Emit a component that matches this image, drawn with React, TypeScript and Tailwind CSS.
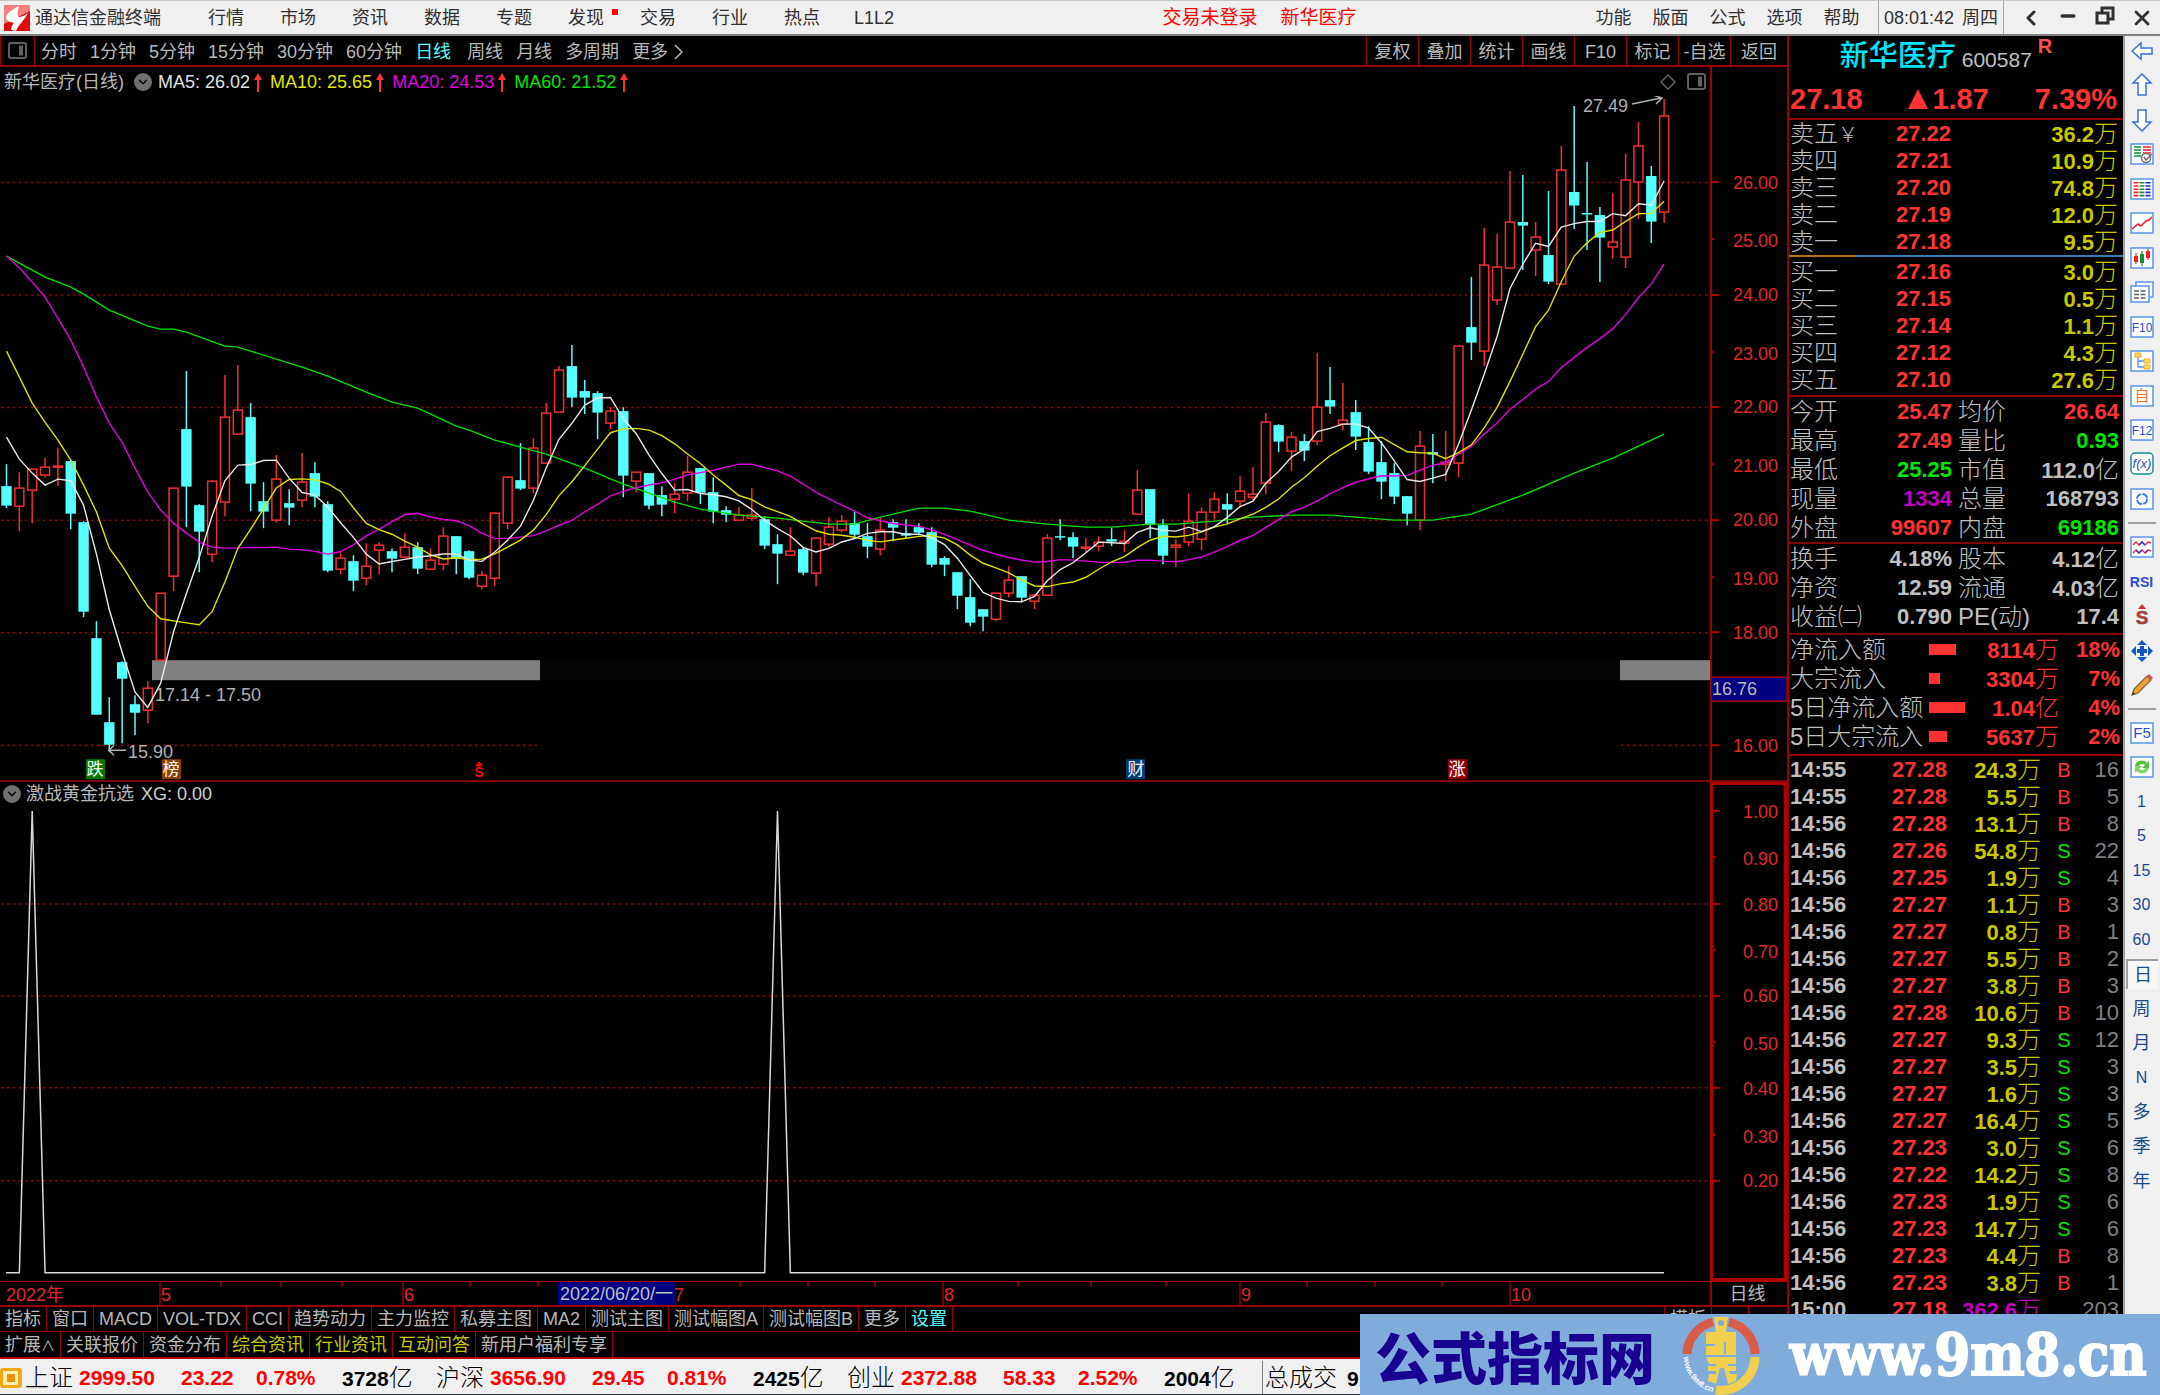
import type { ReactNode } from 'react';
import { ChevronDown, ChevronLeft, Minus, X } from 'lucide-react';

// direction, high, body top, body bottom, low
type Candle = ['u' | 'd', number, number, number, number];

const candles: Candle[] = [
  ['d', 464, 486, 505, 508], ['u', 472, 488, 506, 531], ['u', 469, 469, 490, 523], ['u', 458, 467, 475, 477], ['u', 448, 466, 466, 486],
  ['d', 460, 461, 513, 529], ['d', 521, 522, 611, 617], ['d', 621, 638, 714, 714], ['d', 697, 722, 744, 752], ['d', 661, 662, 678, 743],
  ['d', 695, 704, 712, 735], ['u', 681, 688, 710, 723], ['u', 593, 593, 660, 660], ['u', 488, 488, 576, 591], ['d', 371, 429, 486, 527],
  ['d', 504, 505, 531, 572], ['u', 480, 481, 554, 562], ['u', 375, 417, 502, 516], ['u', 365, 410, 434, 434], ['d', 403, 417, 483, 511],
  ['d', 482, 501, 511, 528], ['u', 455, 479, 520, 522], ['d', 489, 503, 507, 525], ['u', 453, 482, 500, 507], ['d', 462, 473, 496, 507],
  ['d', 501, 504, 570, 572], ['u', 552, 558, 569, 574], ['d', 555, 561, 580, 591], ['u', 543, 566, 578, 585], ['u', 542, 545, 550, 574],
  ['d', 548, 551, 558, 572], ['u', 533, 547, 557, 558], ['d', 542, 547, 568, 574], ['u', 548, 560, 569, 570], ['u', 527, 536, 564, 570],
  ['d', 536, 536, 558, 574], ['d', 550, 551, 577, 579], ['u', 571, 575, 586, 589], ['u', 512, 513, 578, 586], ['u', 476, 477, 523, 529],
  ['d', 443, 480, 488, 490], ['u', 438, 448, 488, 493], ['u', 403, 413, 463, 463], ['u', 366, 370, 412, 412], ['d', 345, 366, 397, 407],
  ['d', 380, 391, 397, 414], ['d', 391, 393, 412, 439], ['u', 407, 411, 423, 429], ['d', 407, 411, 475, 497], ['u', 472, 472, 481, 492],
  ['d', 473, 473, 505, 509], ['d', 486, 495, 504, 516], ['u', 483, 494, 499, 513], ['u', 456, 472, 493, 501], ['d', 468, 468, 492, 504],
  ['d', 477, 492, 511, 523], ['d', 506, 510, 514, 522], ['u', 507, 515, 520, 520], ['u', 488, 515, 518, 520], ['d', 516, 519, 545, 549],
  ['d', 534, 544, 553, 584], ['u', 527, 551, 555, 555], ['d', 547, 549, 572, 575], ['u', 538, 538, 573, 586], ['u', 517, 527, 544, 547],
  ['u', 515, 521, 530, 532], ['d', 511, 523, 534, 538], ['d', 523, 536, 546, 558], ['u', 517, 530, 549, 555], ['d', 519, 522, 527, 541],
  ['d', 519, 533, 535, 538], ['d', 523, 527, 532, 535], ['d', 527, 532, 564, 567], ['d', 556, 558, 564, 576], ['d', 572, 572, 595, 609],
  ['d', 579, 597, 622, 626], ['d', 609, 609, 616, 631], ['u', 593, 593, 619, 621], ['u', 566, 580, 593, 597], ['d', 576, 576, 597, 602],
  ['u', 594, 595, 601, 609], ['u', 534, 538, 595, 595], ['d', 519, 536, 537, 540], ['d', 532, 537, 546, 558], ['u', 538, 547, 547, 552],
  ['u', 536, 542, 546, 551], ['d', 528, 539, 541, 546], ['u', 530, 541, 543, 552], ['u', 470, 490, 514, 514], ['d', 489, 489, 524, 538],
  ['d', 519, 525, 555, 564], ['u', 539, 545, 547, 567], ['u', 493, 521, 542, 546], ['u', 507, 512, 539, 550], ['u', 492, 499, 512, 519],
  ['d', 493, 504, 509, 523], ['u', 476, 491, 501, 507], ['u', 467, 494, 497, 500], ['u', 413, 422, 483, 494], ['d', 424, 425, 441, 452],
  ['u', 432, 437, 451, 471], ['d', 434, 441, 450, 461], ['u', 353, 407, 441, 445], ['d', 367, 400, 406, 414], ['u', 383, 420, 424, 430],
  ['d', 400, 412, 436, 450], ['d', 426, 442, 471, 474], ['d', 441, 462, 481, 499], ['d', 463, 473, 496, 504], ['d', 496, 496, 513, 525],
  ['u', 431, 446, 520, 530], ['d', 434, 452, 454, 483], ['u', 431, 462, 464, 481], ['u', 346, 346, 463, 477], ['d', 277, 327, 342, 360],
  ['u', 228, 265, 351, 366], ['u', 234, 267, 300, 305], ['u', 171, 222, 268, 268], ['d', 175, 222, 225, 270], ['u', 222, 237, 250, 276],
  ['d', 191, 255, 281, 284], ['u', 146, 170, 284, 284], ['d', 106, 192, 205, 229], ['d', 162, 213, 214, 250], ['d', 207, 215, 237, 282],
  ['u', 193, 242, 247, 259], ['u', 154, 180, 257, 268], ['u', 122, 146, 182, 219], ['d', 166, 176, 221, 243], ['u', 99, 116, 212, 223],
];

const xAt = (i: number) => 6.5 + 12.85 * i;
const closeOf = (c: Candle) => (c[0] === 'u' ? c[2] : c[3]);

// the first values come from bars that lie before the visible window
function movingAverage(n: number, lead: number[]) {
  return candles
    .map((_, i) => {
      const y = i < lead.length ? lead[i] : candles.slice(i - n + 1, i + 1).reduce((s, c) => s + closeOf(c), 0) / n;
      return `${xAt(i).toFixed(1)},${y.toFixed(1)}`;
    })
    .join(' ');
}

const ma5 = movingAverage(5, [437, 459, 473, 485]);
const ma10 = movingAverage(10, [351, 377, 403, 422, 440, 460, 485, 512, 548]);
const ma20 = movingAverage(20, [256, 268, 282, 297, 318, 340, 367, 397, 423, 442, 468, 492, 510, 523, 533, 542, 547, 548, 548]);
const ma60 = [
  [0, 256], [3, 277], [5, 287], [6, 294], [8, 310], [11, 326], [12, 329], [13, 329], [14, 332], [17, 346], [18, 347], [19, 351],
  [22, 363], [23, 367], [25, 376], [28, 392], [30, 402], [32, 408], [35, 426], [36, 430], [38, 440], [40, 447], [42, 454], [45, 468],
  [48, 484], [50, 493], [52, 502], [54, 509], [57, 515], [60, 518], [62, 521], [64, 524], [66, 524], [68, 517], [71, 508], [73, 508],
  [75, 511], [78, 520], [81, 524], [84, 527], [86, 527], [89, 524], [91, 524], [94, 521], [97, 517], [100, 515], [103, 515], [106, 518],
  [108, 520], [111, 520], [112, 518], [114, 514], [118, 495], [122, 473], [125, 458], [129, 434],
].map(([i, y]) => `${xAt(i).toFixed(1)},${y}`).join(' ');

const priceAxis = [
  { label: '26.00', y: 182, at: 183 }, { label: '25.00', y: 239, at: 241 }, { label: '24.00', y: 295, at: 295 },
  { label: '23.00', y: 352, at: 354 }, { label: '22.00', y: 407, at: 407 }, { label: '21.00', y: 464, at: 466 },
  { label: '20.00', y: 520, at: 520 }, { label: '19.00', y: 577, at: 579 }, { label: '18.00', y: 632, at: 633 },
  { label: '16.00', y: 745, at: 746 },
];

const signalAxis = [
  { label: '1.00', y: 811, at: 812 }, { label: '0.90', y: 857, at: 859 }, { label: '0.80', y: 904, at: 905 },
  { label: '0.70', y: 950, at: 952 }, { label: '0.60', y: 996, at: 996 }, { label: '0.50', y: 1042, at: 1044 },
  { label: '0.40', y: 1088, at: 1089 }, { label: '0.30', y: 1135, at: 1137 }, { label: '0.20', y: 1181, at: 1181 },
];

const asks = [['卖五', '27.22', '36.2万'], ['卖四', '27.21', '10.9万'], ['卖三', '27.20', '74.8万'], ['卖二', '27.19', '12.0万'], ['卖一', '27.18', '9.5万']];
const bids = [['买一', '27.16', '3.0万'], ['买二', '27.15', '0.5万'], ['买三', '27.14', '1.1万'], ['买四', '27.12', '4.3万'], ['买五', '27.10', '27.6万']];

const RED = 'text-[#ff3232]';
const GREEN = 'text-[#00e600]';
const GREY = 'text-[#c0c0c0]';
const PURPLE = 'text-[#c000c0]';

const dayStats = [
  ['今开', '25.47', RED, '均价', '26.64', RED],
  ['最高', '27.49', RED, '量比', '0.93', GREEN],
  ['最低', '25.25', GREEN, '市值', '112.0亿', GREY],
  ['现量', '1334', PURPLE, '总量', '168793', GREY],
  ['外盘', '99607', RED, '内盘', '69186', GREEN],
];
const baseStats = [
  ['换手', '4.18%', GREY, '股本', '4.12亿', GREY],
  ['净资', '12.59', GREY, '流通', '4.03亿', GREY],
  ['收益㈡', '0.790', GREY, 'PE(动)', '17.4', GREY],
];
const flows = [
  { label: '净流入额', bar: 27, amount: '8114万', pct: '18%' },
  { label: '大宗流入', bar: 11, amount: '3304万', pct: '7%' },
  { label: '5日净流入额', bar: 36, amount: '1.04亿', pct: '4%' },
  { label: '5日大宗流入', bar: 18, amount: '5637万', pct: '2%' },
];
const ticks = [
  ['14:55', '27.28', '24.3万', 'B', '16'], ['14:55', '27.28', '5.5万', 'B', '5'], ['14:56', '27.28', '13.1万', 'B', '8'],
  ['14:56', '27.26', '54.8万', 'S', '22'], ['14:56', '27.25', '1.9万', 'S', '4'], ['14:56', '27.27', '1.1万', 'B', '3'],
  ['14:56', '27.27', '0.8万', 'B', '1'], ['14:56', '27.27', '5.5万', 'B', '2'], ['14:56', '27.27', '3.8万', 'B', '3'],
  ['14:56', '27.28', '10.6万', 'B', '10'], ['14:56', '27.27', '9.3万', 'S', '12'], ['14:56', '27.27', '3.5万', 'S', '3'],
  ['14:56', '27.27', '1.6万', 'S', '3'], ['14:56', '27.27', '16.4万', 'S', '5'], ['14:56', '27.23', '3.0万', 'S', '6'],
  ['14:56', '27.22', '14.2万', 'S', '8'], ['14:56', '27.23', '1.9万', 'S', '6'], ['14:56', '27.23', '14.7万', 'S', '6'],
  ['14:56', '27.23', '4.4万', 'B', '8'], ['14:56', '27.23', '3.8万', 'B', '1'], ['15:00', '27.18', '362.6万', '', '203'],
];

const indices = [
  { name: '上证', value: '2999.50', change: '23.22', pct: '0.78%', amount: '3728亿' },
  { name: '沪深', value: '3656.90', change: '29.45', pct: '0.81%', amount: '2425亿' },
  { name: '创业', value: '2372.88', change: '58.33', pct: '2.52%', amount: '2004亿' },
];

/* ---------- small pieces ---------- */

// digits are bold, the unit behind them is not
function Num({ value }: { value: string }) {
  const unit = /[万亿]$/.test(value) ? value.slice(-1) : '';
  return (
    <>
      <span className="text-[22px] font-bold">{unit ? value.slice(0, -1) : value}</span>
      {unit && <span className="text-2xl leading-none font-light">{unit}</span>}
    </>
  );
}

function PaneIcon({ className }: { className: string }) {
  return (
    <svg className={className} width="19" height="17" viewBox="0 0 19 17" fill="none">
      <rect x="1" y="1" width="17" height="15" rx="2" stroke="currentColor" strokeWidth="2" />
      <rect x="11" y="3.500" width="4" height="10" fill="currentColor" />
    </svg>
  );
}

function ToggleDot() {
  return (
    <button aria-label="展开" className="flex size-[18px] shrink-0 items-center justify-center rounded-full bg-[#707070] text-black">
      <ChevronDown size={14} strokeWidth={2.5} />
    </button>
  );
}

function UpArrow() {
  return (
    <svg width="8" height="20" viewBox="0 0 8 20" fill="#ff3232">
      <path d="M4 1 8 8H0z" />
      <rect x="3" y="7" width="2" height="13" />
    </svg>
  );
}

/* ---------- header ---------- */

function TitleBar() {
  const menu = ['行情', '市场', '资讯', '数据', '专题', '发现', '交易', '行业', '热点', 'L1L2'];
  return (
    <header className="flex h-9 shrink-0 items-center border-t border-b-2 border-t-[#c8c8c8] border-b-[#808080] bg-[#f0f0f0] text-lg leading-none text-[#303030]">
      <svg className="ml-1 shrink-0" width="26" height="26" viewBox="0 0 26 26">
        <rect width="26" height="26" fill="#e00a0a" />
        <path d="M0 0h26v6L0 19z" fill="#f28080" />
        <path d="M15 1C9 4 3 8 2 12c0 4 4 5 8 6-2 2-3 4-3 7l5 1c3-7 8-10 12-18-4 3-7 4-9 4-2-1-2-5 0-11z" fill="#fff" />
      </svg>
      <h1 className="ml-[5px] w-[155px] shrink-0 whitespace-nowrap">通达信金融终端</h1>
      <nav className="flex shrink-0">
        {menu.map(m => (
          <button key={m} className="relative w-[72px] text-center">
            {m}
            {m === '发现' && <span className="absolute top-0 right-1 size-1.5 bg-[#ff0000]" />}
          </button>
        ))}
      </nav>
      <div className="flex flex-1 justify-center gap-[23px] pl-6 text-[19px] whitespace-nowrap text-[#ff0000]">
        <button>交易未登录</button>
        <button>新华医疗</button>
      </div>
      <nav className="flex shrink-0">
        {['功能', '版面', '公式', '选项', '帮助'].map(m => (
          <button key={m} className="w-[57px] text-center">{m}</button>
        ))}
      </nav>
      <div className="ml-2 flex h-full w-[126px] shrink-0 items-center justify-center gap-2 border-x border-[#a8a8a8] whitespace-nowrap">
        <time>08:01:42</time>
        <span>周四</span>
      </div>
      <div className="ml-2 flex shrink-0 text-[#303030]">
        <button aria-label="后退" className="flex w-[37px] justify-center"><ChevronLeft size={24} strokeWidth={3} /></button>
        <button aria-label="最小化" className="flex w-[37px] justify-center"><Minus size={20} strokeWidth={4} /></button>
        <button aria-label="还原" className="flex w-[37px] justify-center">
          <svg width="20" height="20" viewBox="0 0 20 20" fill="none" stroke="currentColor" strokeWidth="3">
            <path d="M7 6V2h11v11h-4" />
            <rect x="2" y="7" width="11" height="10" />
          </svg>
        </button>
        <button aria-label="关闭" className="flex w-[37px] justify-center"><X size={24} strokeWidth={2.8} /></button>
      </div>
    </header>
  );
}

function PeriodBar() {
  const periods = ['分时', '1分钟', '5分钟', '15分钟', '30分钟', '60分钟', '日线', '周线', '月线', '多周期'];
  return (
    <div className="flex h-[31px] shrink-0 items-stretch border-b-2 border-l border-[#990000] text-lg leading-none">
      <button aria-label="布局" className="flex w-[34px] items-center justify-center border-r border-[#990000]">
        <PaneIcon className="text-[#606060]" />
      </button>
      <nav className="flex flex-1 items-center gap-[13px] pt-0.5 pl-1.5 whitespace-nowrap">
        {periods.map(p => (
          <button key={p} className={p === '日线' ? 'mr-[3px] text-[#54ffff]' : ''}>{p}</button>
        ))}
        <button className="flex items-center gap-1.5">
          更多
          <svg width="9" height="16" viewBox="0 0 9 16" fill="none" stroke="currentColor" strokeWidth="1.500"><path d="m1 1 7 7-7 7" /></svg>
        </button>
      </nav>
      <nav className="flex">
        {['复权', '叠加', '统计', '画线', 'F10', '标记', '-自选', '返回'].map(t => (
          <button key={t} className="w-[52px] border-l border-[#990000] pt-0.5 text-center whitespace-nowrap last:w-[57px]">{t}</button>
        ))}
      </nav>
    </div>
  );
}

/* ---------- charts ---------- */

function CandleChart() {
  return (
    <svg className="block min-h-0 w-full flex-1" viewBox="0 96 1710 684" preserveAspectRatio="none" fontSize="18">
      <g stroke="#a00000" strokeWidth="1.500" strokeDasharray="2 4">
        {[182.5, 295, 407.5, 520, 632.5].map(y => <line key={y} x1="1" x2="1710" y1={y} y2={y} />)}
        <line x1="1" x2="540" y1="745" y2="745" />
        <line x1="1621" x2="1710" y1="745" y2="745" />
      </g>
      <rect x="540" y="660" width="1080" height="20" fill="#050505" />
      <rect x="152" y="660" width="388" height="20" fill="#808080" />
      <rect x="1620" y="660" width="90" height="20" fill="#808080" />
      {candles.map(([dir, high, top, bottom, low], i) => {
        const x = xAt(i);
        const h = Math.max(bottom - top, 1);
        return dir === 'u' ? (
          <g key={i} stroke="#f03030" strokeWidth="1.500">
            <path d={`M${x} ${high}V${top}M${x} ${bottom}V${low}`} />
            <rect x={x - 4.5} y={top} width="9" height={h} fill="#000" />
          </g>
        ) : (
          <g key={i} fill="#54ffff">
            <path d={`M${x} ${high}V${low}`} stroke="#54ffff" strokeWidth="1.500" />
            <rect x={x - 5.2} y={top} width="10.400" height={h + 0.5} />
          </g>
        );
      })}
      <g fill="none" strokeWidth="1.400">
        <polyline points={ma60} stroke="#00e000" />
        <polyline points={ma20} stroke="#e000e0" />
        <polyline points={ma10} stroke="#e0e000" />
        <polyline points={ma5} stroke="#e8e8e8" />
      </g>
      <g fill="#b0b0b0">
        <text x="155" y="701">17.14 - 17.50</text>
        <text x="128" y="758">15.90</text>
        <text x="1583" y="112">27.49</text>
      </g>
      <g stroke="#b0b0b0" strokeWidth="1.500" fill="none">
        <path d="M126 750H109M114 745l-5 5 5 5" />
        <path d="M1632 104l29-6M1653 95l9 3-6 6" />
      </g>
      <g fontSize="17" fill="#fff" textAnchor="middle">
        <rect x="86" y="759" width="19" height="20" fill="#007800" />
        <text x="95" y="775">跌</text>
        <rect x="162" y="759" width="19" height="20" fill="#8a4000" />
        <text x="171" y="775">榜</text>
        <rect x="1126" y="759" width="19" height="20" fill="#003c78" />
        <text x="1136" y="775">财</text>
        <rect x="1448" y="759" width="19" height="20" fill="#900000" />
        <text x="1457" y="775">涨</text>
        <text x="479" y="777" fontSize="14" fill="#ff0000" className="font-bold">S</text>
        <path d="M479 761l4 5h-8z" fill="#ff0000" />
      </g>
    </svg>
  );
}

function SignalChart() {
  const peak = (i: number) => `H${xAt(i - 1)}L${xAt(i)} 811L${xAt(i + 1)} 1273`;
  return (
    <svg className="block min-h-0 w-full flex-1" viewBox="0 806 1710 475" preserveAspectRatio="none">
      <g stroke="#a00000" strokeWidth="1.500" strokeDasharray="2 4">
        {[904, 996, 1088, 1181].map(y => <line key={y} x1="1" x2="1710" y1={y} y2={y} />)}
      </g>
      <path d={`M6 1273${peak(2)}${peak(60)}H1664`} fill="none" stroke="#d8d8d8" strokeWidth="1.500" />
    </svg>
  );
}

function AxisLabels({ rows, left }: { rows: typeof priceAxis; left: number }) {
  return (
    <>
      {rows.map((r, i) => (
        <g key={r.label}>
          <path d={`M${left} ${r.y}h${i % 2 && r.label !== '16.00' ? 3 : 8}`} stroke="#b00000" strokeWidth="2" />
          <text x="1778" y={r.at + 6} textAnchor="end" fill="#e02828">{r.label}</text>
        </g>
      ))}
    </>
  );
}

function PricePane() {
  return (
    <section className="flex min-h-0 flex-[715] border-b-2 border-[#7c0008]">
      <div className="flex min-w-0 flex-1 flex-col">
        <div className="flex h-[29px] shrink-0 items-center text-lg leading-none whitespace-nowrap">
          <span className="ml-1 w-[130px]">新华医疗(日线)</span>
          <ToggleDot />
          <span className="ml-1.5 flex items-center gap-1 text-[#e0e0e0]">MA5: 26.02<UpArrow /></span>
          <span className="ml-2 flex items-center gap-1 text-[#e6e600]">MA10: 25.65<UpArrow /></span>
          <span className="ml-2 flex items-center gap-1 text-[#e000e0]">MA20: 24.53<UpArrow /></span>
          <span className="ml-2 flex items-center gap-1 text-[#00e600]">MA60: 21.52<UpArrow /></span>
          <span className="mr-1 ml-auto flex items-center gap-2.5 text-[#606060]">
            <svg width="18" height="16" viewBox="0 0 18 16" fill="none" stroke="currentColor" strokeWidth="1.500"><path d="M9 1 16 8 9 15 2 8z" /></svg>
            <PaneIcon className="text-[#606060]" />
          </span>
        </div>
        <CandleChart />
      </div>
      <svg className="block h-full w-[77px] shrink-0" viewBox="1710 67 77 713" preserveAspectRatio="none" fontSize="18">
        <path d="M1711 67v713" stroke="#a00000" strokeWidth="2" />
        <AxisLabels rows={priceAxis} left={1711} />
        <rect x="1711" y="677" width="76" height="24" fill="#000080" stroke="#a00000" strokeWidth="1.500" />
        <text x="1712" y="695" fill="#b8b8b8">16.76</text>
      </svg>
    </section>
  );
}

function SignalPane() {
  return (
    <section className="flex min-h-0 flex-[500] border-b border-[#b00000]">
      <div className="flex min-w-0 flex-1 flex-col">
        <div className="flex h-6 shrink-0 items-center pl-[3px] text-lg leading-none">
          <ToggleDot />
          <span className="ml-[5px]">激战黄金抗选</span>
          <span className="ml-[7px] text-[#d0d0d0]">XG: 0.00</span>
        </div>
        <SignalChart />
      </div>
      <div className="w-[77px] shrink-0 border-[3px] border-[#b00000]">
        <svg className="block h-full w-full" viewBox="1713 785 71 493" preserveAspectRatio="none" fontSize="18">
          <AxisLabels rows={signalAxis} left={1712} />
        </svg>
      </div>
    </section>
  );
}

function DateAxis() {
  const months = [[160, '5'], [403, '6'], [943, '8'], [1240, '9'], [1510, '10']] as const;
  return (
    <div className="flex h-[25px] shrink-0 border-b-2 border-[#990000]">
      <svg className="block h-full min-w-0 flex-1" viewBox="0 1282 1710 23" preserveAspectRatio="none" fontSize="18" fill="#e02828">
        <path
          d="M221 1282v5M281 1282v5M342 1282v5M470 1282v5M538 1282v5M740 1282v5M808 1282v5M875 1282v5M1018 1282v5M1091 1282v5M1166 1282v5M1307 1282v5M1375 1282v5M1442 1282v5"
          stroke="#990000"
          strokeWidth="1.500"
        />
        <text x="6" y="1301">2022年</text>
        {months.map(([x, label]) => (
          <g key={label}>
            <path d={`M${x} 1282v23`} stroke="#990000" strokeWidth="1.500" />
            <text x={x + 1} y="1301">{label}</text>
          </g>
        ))}
        <rect x="558" y="1282" width="118" height="23" fill="#000080" />
        <text x="560" y="1300" fill="#c0c0c0">2022/06/20/一</text>
        <text x="674" y="1301">7</text>
      </svg>
      <div className="flex w-[77px] shrink-0 items-center justify-center border-l-2 border-[#990000] pr-1 text-lg leading-none">日线</div>
    </div>
  );
}

function Tab({ children, color = '' }: { children: ReactNode; color?: string }) {
  return <button className={`border-r border-[#990000] px-[5px] whitespace-nowrap ${color}`}>{children}</button>;
}

function BottomTabs() {
  const indicators = ['指标', '窗口', 'MACD', 'VOL-TDX', 'CCI', '趋势动力', '主力监控', '私募主图', 'MA2', '测试主图', '测试幅图A', '测试幅图B', '更多'];
  return (
    <>
      <nav className="flex h-[25px] shrink-0 border-b border-[#990000] text-[18px] leading-none">
        {indicators.map(t => <Tab key={t}>{t}</Tab>)}
        <Tab color="text-[#54ffff]">设置</Tab>
        <span className="ml-auto flex border-l border-[#990000]">
          <Tab>模板</Tab>
          <button className="w-[37px] border-r border-[#990000]">+</button>
          <button className="w-[38px]">-</button>
        </span>
      </nav>
      <nav className="flex h-[27px] shrink-0 border-b-2 border-[#b00000] text-[18px] leading-none">
        <Tab>扩展<span className="text-sm leading-none">∧</span></Tab>
        <Tab>关联报价</Tab>
        <Tab>资金分布</Tab>
        <Tab color="text-[#c8c800]">综合资讯</Tab>
        <Tab color="text-[#c8c800]">行业资讯</Tab>
        <Tab color="text-[#c8c800]">互动问答</Tab>
        <Tab>新用户福利专享</Tab>
      </nav>
    </>
  );
}

/* ---------- quote panel ---------- */

function OrderRows({ rows }: { rows: string[][] }) {
  return (
    <table className="w-full table-fixed leading-none">
      <tbody>
        {rows.map(([label, price, volume]) => (
          <tr key={label} className="h-[27px]">
            <th scope="row" className="w-[68px] p-0 pl-px text-left text-2xl leading-none font-light whitespace-nowrap">
              {label}{label === '卖五' && <span className="text-xl leading-none">￥</span>}
            </th>
            <td className="w-[94px] p-0 text-right text-[#ff3232]"><Num value={price} /></td>
            <td className="p-0 pr-[5px] text-right text-[#c8c800]"><Num value={volume} /></td>
          </tr>
        ))}
      </tbody>
    </table>
  );
}

function StatRows({ rows }: { rows: string[][] }) {
  return (
    <table className="w-full table-fixed leading-none">
      <tbody>
        {rows.map(([a, av, ac, b, bv, bc]) => (
          <tr key={a} className="h-[29px]">
            <th scope="row" className="w-[82px] p-0 pl-px text-left text-2xl leading-none font-light whitespace-nowrap">{a}</th>
            <td className={`w-[81px] p-0 text-right ${ac}`}><Num value={av} /></td>
            <th scope="row" className="w-[78px] p-0 pl-1.5 text-left text-2xl leading-none font-light whitespace-nowrap">{b}</th>
            <td className={`p-0 pr-1 text-right whitespace-nowrap ${bc}`}><Num value={bv} /></td>
          </tr>
        ))}
      </tbody>
    </table>
  );
}

function QuotePanel() {
  return (
    <aside className="flex w-[336px] shrink-0 flex-col overflow-hidden border-l-2 border-[#990000] leading-none text-[#c0c0c0]">
      <div className="flex h-10 shrink-0 items-center justify-center pr-5">
        <h2 className="text-[29px] leading-none font-medium text-[#00e5ff]">新华医疗</h2>
        <span className="mt-1.5 ml-1.5 text-[21px] leading-none">600587</span>
        <sup className="ml-1.5 text-xl leading-none font-bold text-[#ff5050]">R</sup>
      </div>
      <div className="flex h-[44px] shrink-0 items-center justify-between border-b-2 border-[#990000] pt-1 pr-1.5 pl-px text-[29px] leading-none font-bold text-[#ff3232]">
        <span>27.18</span>
        <span className="flex items-center">
          <svg width="20" height="20" viewBox="0 0 20 20" fill="currentColor"><path d="M10 0 20 20H0z" /></svg>
          <span className="ml-1">1.87</span>
        </span>
        <span>7.39%</span>
      </div>
      <OrderRows rows={asks} />
      <div className="mb-px flex h-0.5 shrink-0">
        <span className="w-1/5 bg-[#b87020]" />
        <span className="flex-1 bg-[#3a7ab8]" />
      </div>
      <OrderRows rows={bids} />
      <div className="h-1 shrink-0 border-b-2 border-[#990000]" />
      <StatRows rows={dayStats} />
      <div className="h-0.5 shrink-0 bg-[#7c0000]" />
      <StatRows rows={baseStats} />
      <div className="h-1 shrink-0 border-b-2 border-[#7c0000]" />
      <table className="w-full table-fixed">
        <tbody>
          {flows.map(f => (
            <tr key={f.label} className="h-[29px]">
              <th scope="row" className="w-[140px] p-0 pl-px text-left text-2xl leading-none font-light whitespace-nowrap">{f.label}</th>
              <td className="w-[40px] p-0"><div className="h-[11px] bg-[#ff3232]" style={{ width: f.bar }} /></td>
              <td className="w-[90px] p-0 text-right whitespace-nowrap text-[#ff3232]"><Num value={f.amount} /></td>
              <td className="p-0 pr-[3px] text-right text-[#ff3232]"><Num value={f.pct} /></td>
            </tr>
          ))}
        </tbody>
      </table>
      <div className="h-[5px] shrink-0 border-b-2 border-[#990000]" />
      <div className="min-h-0 flex-1 overflow-hidden">
        <table className="w-full table-fixed">
          <tbody>
            {ticks.map(([time, price, volume, side, count], i) => (
              <tr key={i} className="h-[27px]">
                <td className="w-[72px] p-0 pl-px"><Num value={time} /></td>
                <td className="w-[86px] p-0 text-right text-[#ff3232]"><Num value={price} /></td>
                <td className={`w-[94px] p-0 text-right whitespace-nowrap ${side ? 'text-[#c8c800]' : 'text-[#c000c0]'}`}><Num value={volume} /></td>
                <td className={`w-[46px] p-0 text-center text-xl leading-none font-medium ${side === 'B' ? 'text-[#ff3232]' : 'text-[#00e600]'}`}>{side}</td>
                <td className="p-0 pr-1 text-[22px] leading-none text-[#808080]"><div className="flex justify-end">{count}</div></td>
              </tr>
            ))}
          </tbody>
        </table>
      </div>
    </aside>
  );
}

/* ---------- right tool strip ---------- */

function Glyph({ children, frame = true }: { children: ReactNode; frame?: boolean }) {
  return (
    <svg width="24" height="24" viewBox="0 0 24 24" fill="none">
      {frame && <rect x="1" y="2" width="22" height="20" fill="#fff" stroke="#5a94e8" strokeWidth="1.500" />}
      {children}
    </svg>
  );
}

function LabelGlyph({ text, color = '#2850c8', size = 14 }: { text: string; color?: string; size?: number }) {
  return (
    <Glyph>
      <text x="12" y="17" textAnchor="middle" fontSize={size} fill={color}>{text}</text>
    </Glyph>
  );
}

const topTools: [string, ReactNode][] = [
  ['左移', <Glyph frame={false}><path d="M2 12 11 4v5h11v6H11v5z" fill="#fff" stroke="#3c6ee0" strokeWidth="1.500" /></Glyph>],
  ['上移', <Glyph frame={false}><path d="M12 1 21 10h-5v12H8V10H3z" fill="#fff" stroke="#3c6ee0" strokeWidth="1.500" /></Glyph>],
  ['下移', <Glyph frame={false}><path d="M12 23 3 14h5V2h8v12h5z" fill="#fff" stroke="#3c6ee0" strokeWidth="1.500" /></Glyph>],
  ['自选报价', <Glyph><path d="M4 5h7M4 8h7M4 11h7M4 14h7" stroke="#109030" strokeWidth="1.600" /><path d="M13 5h8M13 8h8M13 11h8" stroke="#f02020" strokeWidth="1.600" /><circle cx="16" cy="16" r="4.500" stroke="#707070" strokeWidth="1.500" fill="#fff" /><path d="m14 15 2 3 6-6" stroke="#707070" strokeWidth="1.500" /></Glyph>],
  ['行情列表', <Glyph><g strokeWidth="5" strokeDasharray="1.600 1.600"><path d="M6 5v15" stroke="#f02020" /><path d="M12 5v15" stroke="#109030" /><path d="M18 5v15" stroke="#2020e0" /></g></Glyph>],
  ['分时图', <Glyph><path d="m2 18 6-5 3 2 5-5 3-1 3-3" stroke="#f02020" strokeWidth="1.600" /></Glyph>],
  ['K线图', <Glyph><path d="M6 7v11M18 3v11" stroke="#f02020" strokeWidth="1.200" /><path d="M12 5v15" stroke="#109030" strokeWidth="1.200" /><path d="M4 10h4v6H4zM16 5h4v7h-4z" fill="#f02020" /><path d="M10 8h4v9h-4z" fill="#109030" /></Glyph>],
  ['多窗口', <Glyph frame={false}><path d="M6 7V2h17v15h-4" fill="#fff" stroke="#5a94e8" strokeWidth="1.500" /><rect x="1" y="6" width="18" height="16" fill="#fff" stroke="#5a94e8" strokeWidth="1.500" /><path d="M4 11h12M4 14.500h12M4 18h12" stroke="#606060" strokeWidth="1.400" strokeDasharray="5 1.500" /></Glyph>],
  ['F10', <LabelGlyph text="F10" size={12} />],
  ['板块树', <Glyph><path d="M8 8v10h6M8 12h6" stroke="#5a94e8" strokeWidth="1.300" /><path d="M5 4h6v4H5zM14 10h6v4h-6zM14 16h6v4h-6z" stroke="#f0a820" fill="#ffd868" /></Glyph>],
  ['自选股', <LabelGlyph text="自" color="#f07030" size={15} />],
  ['F12', <LabelGlyph text="F12" size={12} />],
  ['公式', <Glyph frame={false}><rect x="1" y="1" width="22" height="21" rx="4" fill="#fff" stroke="#1a8a90" strokeWidth="1.500" /><text x="12" y="16" textAnchor="middle" fontSize="13" fill="#2850c8" className="italic">f(x)</text></Glyph>],
  ['周期', <Glyph><circle cx="12" cy="12" r="5" stroke="#2878d8" strokeWidth="1.800" strokeDasharray="6.500 1.300" /></Glyph>],
];

const drawTools: [string, ReactNode][] = [
  ['叠加曲线', <Glyph><path d="m3 10 3-3 3 3 3-3 3 3 3-3 3 1M3 18l3-3 3 3 3-3 3 3 3-3 3 1" stroke="#f03030" strokeWidth="1.500" /><path d="m9 10 3-3 3 3M6 15l3 3 3-3M15 18l3-3" stroke="#3040e0" strokeWidth="1.500" /></Glyph>],
  ['RSI', <span className="text-sm leading-none font-bold text-[#3048d8]">RSI</span>],
  ['除权', <Glyph frame={false}><path d="m12 0 4 5H8z" fill="#d03030" /><text x="12" y="20" textAnchor="middle" fontSize="19" fill="#d03030" stroke="#606060" strokeWidth="0.600" className="font-bold">S</text></Glyph>],
  ['移动', <Glyph frame={false}><path d="m12 1 5 5H7zM12 23l-5-5h10zM1 12l5-5v10zM23 12l-5 5V7zM10 7h4v3h3v4h-3v3h-4v-3H7v-4h3z" fill="#1058c8" /></Glyph>],
  ['画笔', <Glyph frame={false}><path d="m2 22 2-6L17 3l4 4L8 20z" fill="#f0a030" stroke="#806030" strokeWidth="1.200" /><path d="m17 3 2-2 4 4-2 2z" fill="#e05050" /><path d="m2 22 1-3 2 2z" fill="#303030" /></Glyph>],
];

const periodTools: [string, ReactNode][] = [
  ['F5', <LabelGlyph text="F5" size={15} />],
  ['刷新', <Glyph><path d="M5 11c1-6 9-7 12-3l2-2v7h-7l3-3c-3-2-5-1-6 1z" fill="#58c040" /><path d="M19 13c-1 6-9 7-12 3l-2 2v-7h7l-3 3c3 2 5 1 6-1z" fill="#80d868" /></Glyph>],
  ...['1', '5', '15', '30', '60', '日', '周', '月', 'N', '多', '季', '年'].map((t): [string, ReactNode] => [t, t]),
];

function ToolGroup({ tools, height }: { tools: [string, ReactNode][]; height: string }) {
  return (
    <div className={`flex w-full flex-col justify-between ${height}`}>
      {tools.map(([name, content]) => (
        <button
          key={name}
          aria-label={name}
          className={`flex h-[30px] items-center justify-center text-base leading-none text-[#1c4890] ${name === '日' ? 'ml-px border-t-2 border-l-2 border-[#a0a0a0] bg-[#f8f8f8]' : ''} ${/^[日周月多季年]$/.test(name) ? 'text-lg' : ''}`}
        >
          {content}
        </button>
      ))}
    </div>
  );
}

function ToolStrip() {
  return (
    <aside className="flex w-[37px] shrink-0 flex-col items-center border-l-2 border-[#a0a0a0] bg-[#f0f0f0] pr-0.5">
      <ToolGroup tools={topTools} height="h-[478px]" />
      <hr className="my-2 w-7 border-t-2 border-[#a0a0a0]" />
      <ToolGroup tools={drawTools} height="h-[168px]" />
      <hr className="my-2 w-7 border-t-2 border-[#a0a0a0]" />
      <ToolGroup tools={periodTools} height="h-[478px]" />
    </aside>
  );
}

/* ---------- footer ---------- */

function StatusBar() {
  return (
    <footer className="flex h-9 shrink-0 items-center border-b border-[#203040] bg-[#f0f0f0] pt-0.5 text-[21px] leading-none font-bold whitespace-nowrap text-black">
      <svg className="mr-[3px] shrink-0" width="22" height="22" viewBox="0 0 22 22">
        <rect width="22" height="20" y="1" rx="3" fill="#f0a818" />
        <rect x="3" y="4" width="15" height="14" fill="#fff0b0" />
        <rect x="7" y="7" width="8" height="8" fill="#e89010" />
      </svg>
      {indices.map(ix => (
        <div key={ix.name} className="flex items-center text-[#ff0000]">
          <span className="w-[54px] text-2xl leading-none font-light text-black">{ix.name}</span>
          <span className="w-[102px]">{ix.value}</span>
          <span className="w-[75px]">{ix.change}</span>
          <span className="w-[86px]">{ix.pct}</span>
          <span className="w-[94px] text-black">{ix.amount.slice(0, -1)}<span className="text-2xl leading-none font-light">亿</span></span>
        </div>
      ))}
      <div className="ml-1 flex h-full items-center gap-2.5 border-l border-[#808080] pl-0.5">
        <span className="text-2xl leading-none font-light">总成交</span>
        <span>9142<span className="text-2xl leading-none font-light">亿</span></span>
      </div>
    </footer>
  );
}

function SiteBanner() {
  return (
    <a href="#site" className="absolute right-0 bottom-0 flex h-[81px] w-[800px] items-center bg-[#80acdb] whitespace-nowrap">
      <span className="ml-[15px] font-['Noto_Sans_CJK_SC',sans-serif] text-[56px] leading-none font-black text-[#1a0090]">公式指标网</span>
      <svg className="ml-[26px] shrink-0" width="80" height="80" viewBox="0 0 80 80" fill="none">
        <path d="M6 39A34 34 0 0 1 32 7" stroke="#d85c48" strokeWidth="9" />
        <path d="M48 7a34 34 0 0 1 26 32" stroke="#d85c48" strokeWidth="9" />
        <path d="M74 42A34 34 0 0 1 35 75" stroke="#f0d04c" strokeWidth="9" />
        <path fill="#f0d04c" fillRule="evenodd" d="M33 2h14l-2 15h10v23H25v-9h9v-2h-9V17h10zM40 5a3 3 0 1 0 0 6 3 3 0 0 0 0-6zM43 27v12h2V27z" />
        <path fill="#f0d04c" d="M25 42h30v7h-8v2h8v5h-7l1 3h7l-1 7-8 3-4-16h-4l-4 16-8-3 1-7h7v-3h-8v-5h8v-2h-7z" />
        <path id="logo-arc" d="M3 42a37 37 0 0 0 29 35" />
        <text fontSize="8" fill="#fff" className="font-bold"><textPath href="#logo-arc">www.9m8.cn</textPath></text>
      </svg>
      <span className="ml-[29px] font-['DejaVu_Serif_Condensed','DejaVu_Serif',serif] text-[57px] leading-none font-bold text-white [-webkit-text-stroke:2px_white]">www.9m8.cn</span>
    </a>
  );
}

export default function App() {
  return (
    <div className="relative flex h-screen min-h-[1200px] w-full flex-col overflow-hidden bg-black font-['Liberation_Sans','Noto_Sans_CJK_SC',sans-serif] text-[#b8b8b8]">
      <TitleBar />
      <div className="flex min-h-0 flex-1">
        <main className="flex min-w-0 flex-1 flex-col">
          <PeriodBar />
          <PricePane />
          <SignalPane />
          <DateAxis />
          <BottomTabs />
        </main>
        <QuotePanel />
        <ToolStrip />
      </div>
      <StatusBar />
      <SiteBanner />
    </div>
  );
}
